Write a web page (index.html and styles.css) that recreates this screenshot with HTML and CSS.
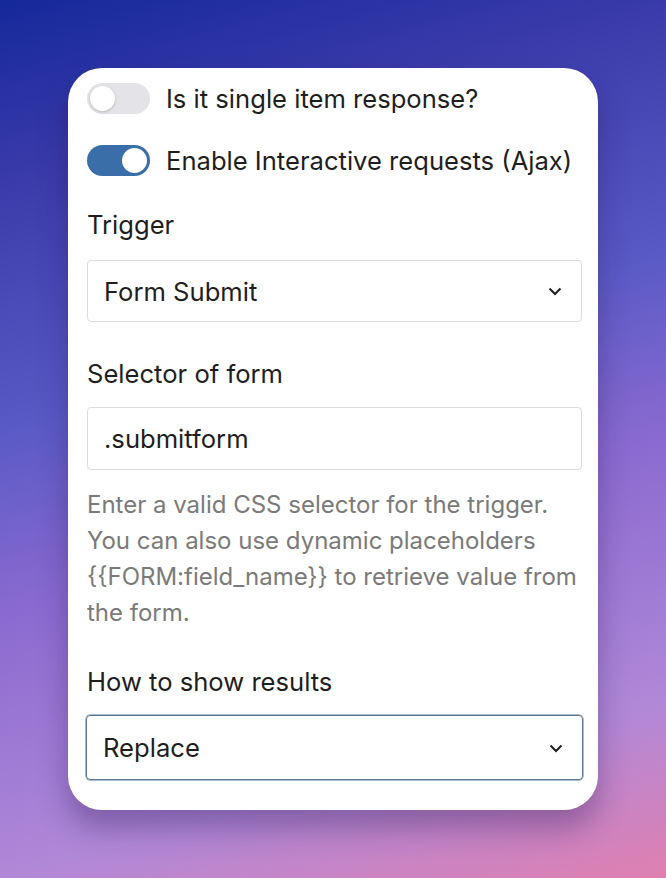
FILE: index.html
```html
<!DOCTYPE html>
<html>
<head>
<meta charset="utf-8">
<link rel="stylesheet" href="styles.css">
</head>
<body>
<div class="card">
  <label class="toggle-row">
    <span class="toggle"><span class="knob"></span></span>
    <span class="toggle-text">Is it single item response?</span>
  </label>
  <label class="toggle-row row2">
    <span class="toggle on"><span class="knob"></span></span>
    <span class="toggle-text">Enable Interactive requests (Ajax)</span>
  </label>

  <div class="field first">
    <div class="label">Trigger</div>
    <div class="select">
      <span>Form Submit</span>
      <svg class="chev" width="16" height="10" viewBox="0 0 16 10"><path d="M2.5 2.5 L8 8 L13.5 2.5" fill="none" stroke="#1e1e1e" stroke-width="2"/></svg>
    </div>
  </div>

  <div class="field second">
    <div class="label">Selector of form</div>
    <div class="input">.submitform</div>
    <p class="help">Enter a valid CSS selector for the trigger. You can also use dynamic placeholders {{FORM:field_name}} to retrieve value from the form.</p>
  </div>

  <div class="field last">
    <div class="label">How to show results</div>
    <div class="select focus">
      <span>Replace</span>
      <svg class="chev" width="16" height="10" viewBox="0 0 16 10"><path d="M2.5 2.5 L8 8 L13.5 2.5" fill="none" stroke="#1e1e1e" stroke-width="2"/></svg>
    </div>
  </div>
</div>
</body>
</html>
```
FILE: styles.css
```css
html, body {
  margin: 0;
  padding: 0;
}
body {
  width: 666px;
  height: 878px;
  box-sizing: border-box;
  padding: 68px 0 0 68px;
  background: linear-gradient(165deg, #15299a 0%, #3a3aaa 17%, #5a5ac6 41%, #8a6ad0 58%, #b088d8 83%, #e080b0 100%);
  font-family: Inter, "Liberation Sans", sans-serif;
  color: #1e1e1e;
  overflow: hidden;
}
.card {
  width: 530px;
  height: 742px;
  box-sizing: border-box;
  background: #fff;
  border-radius: 34px;
  padding: 15px 16px 0 19px;
  box-shadow: 0 18px 30px rgba(40, 20, 80, 0.35);
}
.toggle-row {
  display: flex;
  align-items: center;
  height: 31px;
}
.row2 {
  margin-top: 31px;
}
.toggle {
  width: 63px;
  height: 31px;
  border-radius: 16px;
  background: #e4e4e8;
  position: relative;
  flex: none;
}
.toggle .knob {
  position: absolute;
  top: 3px;
  left: 3px;
  width: 25px;
  height: 25px;
  border-radius: 50%;
  background: #fff;
  box-shadow: 0 1px 3px rgba(0,0,0,0.2);
}
.toggle.on {
  background: #3a6ea8;
}
.toggle.on .knob {
  left: 35px;
  box-shadow: none;
}
.toggle-text {
  margin-left: 16px;
  font-size: 25.6px;
  white-space: nowrap;
}
.label {
  font-size: 25.6px;
  line-height: 30px;
  height: 30px;
}
.field.first {
  margin-top: 34px;
}
.field.second {
  margin-top: 37px;
}
.field.last {
  margin-top: 36px;
}
.select, .input {
  margin-top: 20px;
  height: 62px;
  border: 1px solid #dcdcdc;
  border-radius: 4px;
  box-sizing: border-box;
  display: flex;
  align-items: center;
  padding: 0 0 0 16px;
  font-size: 25.6px;
  width: 495px;
}
.input {
  height: 63px;
  margin-top: 18px;
}
.select {
  justify-content: space-between;
}
.chev {
  margin-right: 18px;
}
.select.focus {
  margin-top: 18px;
  border-color: #5a7896;
  margin-left: -1px;
  width: 497px;
  height: 65px;
  box-shadow: 0 0 0 0.5px #5a7896;
}
.help {
  margin: 17px 0 0;
  font-size: 24px;
  line-height: 36px;
  color: #7a7a7a;
}
```
